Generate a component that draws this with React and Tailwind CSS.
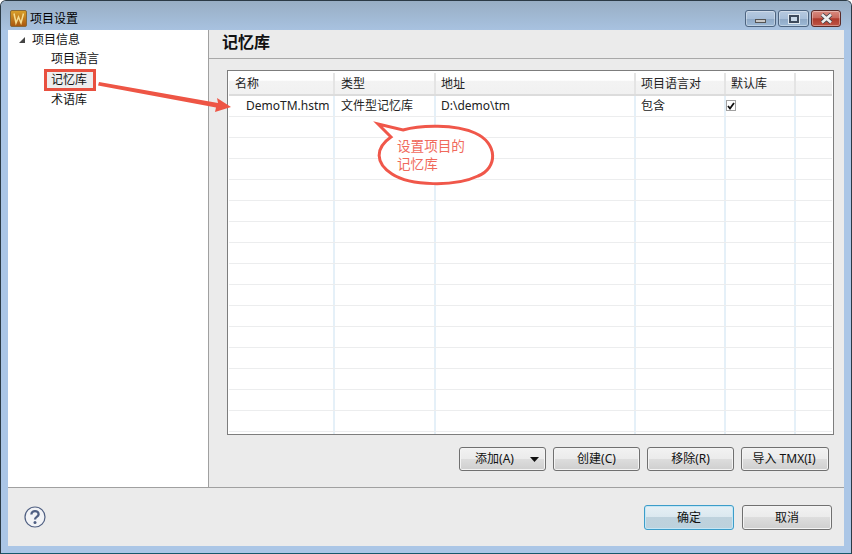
const font = { fontFamily: '"Noto Sans", "Noto Sans CJK SC", sans-serif' };

const columns = [
  { name: '名称', width: 'w-[106px]' },
  { name: '类型', width: 'w-[101px]' },
  { name: '地址', width: 'w-[200px]' },
  { name: '项目语言对', width: 'w-[90px]' },
  { name: '默认库', width: 'w-[70px]' },
  { name: '', width: 'flex-1' },
];

function WinButton({ children, className = '', primary = false, width = 'w-[87px]', height = 'h-[25px]' }) {
  return (
    <div
      className={`${width} ${height} shrink-0 flex items-center justify-center rounded-[3px] border text-[12px] text-[#111] ${className} ${
        primary
          ? 'border-[#3c9dc9] bg-[linear-gradient(#e6f0f5_0%,#dbe8ef_48%,#bed2dd_50%,#bdd1dc_100%)] shadow-[inset_0_0_0_1px_#c5e6f5]'
          : 'border-[#707070] bg-[linear-gradient(#f2f2f2_0%,#ebebeb_48%,#dddddd_50%,#cfcfcf_100%)] shadow-[inset_0_0_0_1px_#f4f4f4]'
      }`}
    >
      {children}
    </div>
  );
}

function CaptionButton({ children, className, width }) {
  return (
    <div className={`${width} h-[17px] flex items-center justify-center rounded-[3px] border border-[#4d6480] shadow-[inset_0_0_0_1px_rgba(255,255,255,0.35)] ${className}`}>
      {children}
    </div>
  );
}

function Row({ cells }) {
  return (
    <div className="flex h-[21px] shrink-0 border-b border-[#ecedee] text-[12px] text-[#222]">
      {columns.map((c, i) => (
        <div key={i} className={`${c.width} shrink-0 border-r-2 border-[#e5f0f8] flex items-center whitespace-nowrap last:border-r-0 ${i === 0 ? 'pl-[17px]' : i === 1 ? 'pl-[6px]' : 'pl-[5px]'}`}>
          {cells && cells[i]}
        </div>
      ))}
    </div>
  );
}

export default function App() {
  return (
    <div style={font} className="relative w-[852px] h-[554px] overflow-hidden bg-[#abc6e6] border border-[#2b3a45] border-b-[#17596b] rounded-t-[6px] flex flex-col">
      {/* Title bar */}
      <div className="h-[29px] shrink-0 flex items-center pl-[9px] pr-[7px] bg-[linear-gradient(#98aec4_0%,#a8c2e0_100%)]">
        <svg width="17" height="17" viewBox="0 0 17 17" className="shrink-0 mt-[5px]">
          <defs>
            <linearGradient id="appIcon" x1="0" y1="0" x2="0" y2="1">
              <stop offset="0" stopColor="#d9a02a" />
              <stop offset="1" stopColor="#a8560e" />
            </linearGradient>
          </defs>
          <rect x="0.5" y="0.5" width="16" height="16" rx="1.5" fill="url(#appIcon)" stroke="#85683a" />
          <path d="M4 3.5 L6 13 L8.5 7 L11 13 L13.5 3.5" fill="none" stroke="#f5dc90" strokeWidth="1.5" />
        </svg>
        <span className="ml-[3px] mt-[6px] text-[12px] text-black">项目设置</span>
        <div className="ml-auto flex self-start mt-[9px] gap-[2px] mr-[3px]">
          <CaptionButton width="w-[31px]" className="bg-[linear-gradient(#b6c9df_0%,#a8bfd9_50%,#8ea8c5_52%,#9db9d6_100%)]">
            <div className="w-[11px] h-[4px] mt-[4px] bg-[#c8c8c8] border border-[#555]" />
          </CaptionButton>
          <CaptionButton width="w-[31px]" className="bg-[linear-gradient(#b6c9df_0%,#a8bfd9_50%,#8ea8c5_52%,#9db9d6_100%)]">
            <div className="w-[10px] h-[8px] border-2 border-[#3d4a5c] bg-[#c8d8e8] outline outline-[#dfe8f0]" />
          </CaptionButton>
          <CaptionButton width="w-[30px]" className="bg-[linear-gradient(#d98b80_0%,#c96a5e_45%,#ae3a2c_52%,#bf5446_100%)] border-[#5a2a28]">
            <svg width="15" height="11" viewBox="0 0 15 11">
              <path d="M3 1.5 L12 9.5 M12 1.5 L3 9.5" stroke="#3d4048" strokeWidth="4.2" />
              <path d="M3 1.5 L12 9.5 M12 1.5 L3 9.5" stroke="#eeeeee" strokeWidth="2.6" />
            </svg>
          </CaptionButton>
        </div>
      </div>

      {/* Client area */}
      <div className="mx-[7px] h-[516px] shrink-0 bg-[#ebebeb] flex flex-col">
        <div className="flex h-[458px] shrink-0 border-b border-[#a0a0a0]">
          {/* Tree */}
          <div className="w-[201px] shrink-0 bg-white border-r border-[#a0a0a0] text-[12px] text-[#111]">
            <div className="h-[19px] flex items-center pl-[10px]">
              <svg width="8" height="8" viewBox="0 0 8 8">
                <path d="M7 1 L7 7 L1 7 Z" fill="#444" />
              </svg>
              <span className="ml-[6px]">项目信息</span>
            </div>
            <div className="h-[20px] flex items-center pl-[43px]">项目语言</div>
            <div className="h-[22px] flex items-center pl-[36px]">
              <div className="w-[52px] h-[22px] flex items-center pl-[4px] border-[3px] border-[#e8503f] bg-[#ededed]">记忆库</div>
            </div>
            <div className="h-[18px] flex items-center pl-[43px]">术语库</div>
          </div>

          {/* Right panel */}
          <div className="flex-1 flex flex-col min-w-0">
            <div className="h-[29px] shrink-0 border-b border-[#a8a8a8] flex items-center pl-[13px] pb-[5px] text-[16px] font-bold text-[#111]">记忆库</div>
            <div className="mt-[11px] ml-[18px] mr-[10px] h-[365px] shrink-0 border border-[#7d7d7d] bg-white px-[1px] flex flex-col overflow-hidden">
              <div className="flex h-[25px] shrink-0 pt-[2px] border-b-2 border-[#dcdcdc] bg-[linear-gradient(#ffffff_0%,#ffffff_40%,#f3f3f3_45%,#f1f1f1_100%)] text-[12px] text-[#222]">
                {columns.map((c, i) => (
                  <div key={i} className={`${c.width} shrink-0 flex items-center ${i === 1 || i === 0 ? 'pl-[6px]' : 'pl-[5px]'} border-r-2 border-[#e4e4e4] whitespace-nowrap last:border-r-0`}>
                    {c.name}
                  </div>
                ))}
              </div>
              <Row
                cells={[
                  'DemoTM.hstm',
                  '文件型记忆库',
                  'D:\\demo\\tm',
                  '包含',
                  <div className="w-[10px] h-[11px] -ml-[5px] -mt-[1px] border border-[#a0a0a0] bg-white flex items-center justify-center">
                    <svg width="8" height="8" viewBox="0 0 8 8">
                      <path d="M1 4 L3 6.5 L7 1" fill="none" stroke="#111" strokeWidth="1.8" />
                    </svg>
                  </div>,
                ]}
              />
              {Array.from({ length: 16 }, (_, i) => (
                <Row key={i} />
              ))}
            </div>
            <div className="mt-[12px] ml-[250px] flex gap-[7px]">
              <WinButton height="h-[24px]" className="relative pr-[16px]">
                添加(A)
                <svg width="9" height="5" viewBox="0 0 9 5" className="absolute right-[6px] top-[9px]">
                  <path d="M0 0 L9 0 L4.5 5 Z" fill="#111" />
                </svg>
              </WinButton>
              <WinButton height="h-[24px]">创建(C)</WinButton>
              <WinButton height="h-[24px]">移除(R)</WinButton>
              <WinButton height="h-[24px]" width="w-[88px]" className="pr-[2px]">导入 TMX(I)</WinButton>
            </div>
          </div>
        </div>

        {/* Footer */}
        <div className="flex-1 flex items-start pt-[17px] pl-[16px] pr-[12px]">
          <svg width="22" height="22" viewBox="0 0 22 22" className="mt-[1px]">
            <circle cx="11" cy="11" r="10" fill="#f2f3f6" stroke="#4f5f82" strokeWidth="1.2" />
            <path d="M7.4 8.4 C7.4 3.8 14.8 4.2 14.6 8.4 C14.5 11 11 10.8 11 13.4" fill="none" stroke="#4f5f82" strokeWidth="2.3" />
            <circle cx="11" cy="16.4" r="1.5" fill="#4f5f82" />
          </svg>
          <WinButton primary width="w-[90px]" className="ml-auto">确定</WinButton>
          <WinButton width="w-[90px]" className="ml-[8px]">取消</WinButton>
        </div>
      </div>

      {/* Arrow annotation */}
      <svg width="852" height="554" className="absolute -left-[1px] -top-[1px] pointer-events-none">
        <path d="M99 82 L218 103 L217 98 L231 107 L215 112 L216 107.5 L98 85.5 Z" fill="#ee5545" />
        <path
          d="M378 124 L403 130 C420 125 455 124 475 133 C498 143 498 168 478 176 C455 187 410 186 392 174 C375 163 375 148 391 137 Z"
          fill="#ffffff"
          stroke="#f0574a"
          strokeWidth="3"
        />
      </svg>
      <div className="absolute left-[396px] top-[136px] w-[80px] text-[13.6px] leading-[18px] text-[#f06a5c]">
        设置项目的
        <br />
        记忆库
      </div>
    </div>
  );
}
